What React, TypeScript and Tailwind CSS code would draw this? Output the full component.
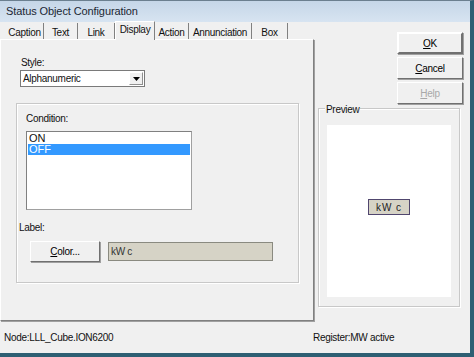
import React from 'react';

// Tabs across the top of the property sheet
const tabs = [
  { label: 'Caption', w: 38 },
  { label: 'Text', w: 34 },
  { label: 'Link', w: 37 },
  { label: 'Display', w: 40, active: true },
  { label: 'Action', w: 34 },
  { label: 'Annunciation', w: 63 },
  { label: 'Box', w: 36 },
];

const WinButton: React.FC<{ children: React.ReactNode; disabled?: boolean; className?: string }> = ({
  children,
  disabled,
  className = '',
}) => (
  <div
    className={`flex items-center justify-center bg-[#f0f0f0] border border-t-white border-l-white border-r-[#707070] border-b-[#707070] shadow-[1px_1px_0_#a0a0a0] ${
      disabled ? 'text-[#a8a8a8]' : 'text-black'
    } ${className}`}
  >
    {children}
  </div>
);

const App: React.FC = () => {
  return (
    <div
      className="w-[474px] h-[357px] bg-[#f0f0f0] text-[10px] tracking-[-0.3px] text-[#111] overflow-hidden flex flex-col border-r-4 border-b-4 border-[#2e5f73] border-t border-t-[#6b7f8f]"
      style={{ fontFamily: '"Liberation Sans", Arial, sans-serif' }}
    >
      {/* Title bar */}
      <div className="h-[21px] flex items-center px-[6px] bg-gradient-to-b from-[#c5d6e8] to-[#d7e4f1] text-[11px] tracking-[-0.1px] text-[#1b2733]">
        Status Object Configuration
      </div>

      <div className="flex flex-1">
        {/* Left: property sheet */}
        <div className="w-[314px] flex flex-col">
          <div className="h-[17px] flex items-end pl-[6px]">
            {tabs.map((t) => (
              <div
                key={t.label}
                style={{ width: t.w }}
                className={`flex items-center justify-center border-r border-[#808080] ${
                  t.active ? 'h-[19px] -mb-px pb-[3px] bg-[#f0f0f0] border-l border-l-white border-t border-t-white z-10' : 'h-[16px] pt-[2px]'
                }`}
              >
                {t.label}
              </div>
            ))}
          </div>

          <div className="h-[282px] border border-l-white border-t-white border-r-[#808080] border-b-[#808080] shadow-[1px_1px_0_#a0a0a0] pl-[15px] pt-[16px]">
            <div className="pl-[5px] h-[14px] leading-[14px]">Style:</div>
            <div className="ml-[4px] w-[125px] h-[17px] bg-white border border-[#7a7a7a] flex items-center justify-between pl-[2px]">
              <span>Alphanumeric</span>
              <div className="w-[14px] h-[13px] mr-px bg-[#f0f0f0] border border-t-white border-l-white border-r-[#909090] border-b-[#909090] flex items-center justify-center">
                <svg width="7" height="4" viewBox="0 0 7 4">
                  <path d="M0 0h7L3.5 4z" fill="#000" />
                </svg>
              </div>
            </div>

            {/* Condition group */}
            <div className="mt-[16px] w-[283px] h-[180px] border border-[#c8c8c8] shadow-[inset_1px_1px_0_white,1px_1px_0_white] pl-[9px] pt-[8px]">
              <div className="h-[13px] leading-[13px] mb-[6px]">Condition:</div>
              <div className="w-[166px] h-[79px] bg-white border border-t-[#808080] border-l-[#808080] border-r-[#a0a0a0] border-b-[#a0a0a0] p-px">
                <div className="h-[11px] leading-[11px] text-[11px] tracking-normal pl-px">ON</div>
                <div className="h-[11px] leading-[11px] text-[11px] tracking-normal pl-px bg-[#3399ff] text-white">OFF</div>
              </div>
              <div className="mt-[11px] h-[13px] leading-[13px] -ml-[7px]">Label:</div>
              <div className="flex items-center mt-[7px] ml-[4px] gap-[8px]">
                <WinButton className="w-[70px] h-[21px]">
                  <span>
                    <span className="underline">C</span>olor...
                  </span>
                </WinButton>
                <div className="w-[165px] h-[19px] bg-[#d6d3c6] border border-[#8a8a80] flex items-center pl-[2px] text-[#333]">
                  kW c
                </div>
              </div>
            </div>
          </div>
        </div>

        {/* Right column */}
        <div className="flex-1 flex flex-col pl-[4px] pt-[10px]">
          <div className="flex flex-col items-end pr-[7px] gap-[3px]">
            <WinButton className="w-[66px] h-[22px] border-[#555] border-2">
              <span>
                <span className="underline">O</span>K
              </span>
            </WinButton>
            <WinButton className="w-[66px] h-[22px]">
              <span>
                <span className="underline">C</span>ancel
              </span>
            </WinButton>
            <WinButton disabled className="w-[66px] h-[22px]">
              <span>
                <span className="underline">H</span>elp
              </span>
            </WinButton>
          </div>

          <div className="relative mt-[4px] w-[142px] h-[199px] border border-[#c8c8c8] shadow-[inset_1px_1px_0_white,1px_1px_0_white] px-[8px] pt-[16px] pb-[9px]">
            <div className="absolute -top-[7px] left-[6px] bg-[#f0f0f0] px-[1px]">Preview</div>
            <div className="w-full h-full bg-white flex items-center justify-center">
              <div className="w-[42px] h-[16px] mb-[8px] bg-[#d6d3c6] border border-[#50466e] flex items-center justify-center tracking-[1px] text-[#222]">
                kW c
              </div>
            </div>
          </div>
        </div>
      </div>

      {/* Status line */}
      <div className="h-[30px] flex items-center pl-[4px] pb-[2px]">
        <div className="w-[309px]">Node:LLL_Cube.ION6200</div>
        <div>Register:MW active</div>
      </div>
    </div>
  );
};

export default App;
